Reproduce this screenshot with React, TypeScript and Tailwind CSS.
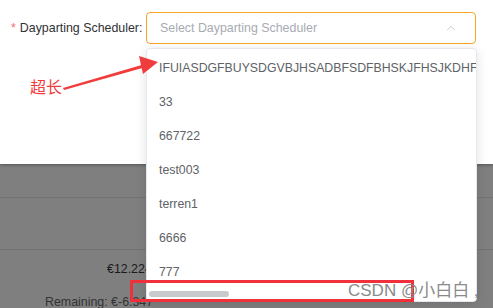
import { ChevronUp } from "lucide-react"

const options = [
  "IFUIASDGFBUYSDGVBJHSADBFSDFBHSKJFHSJKDHFJSDHFKJSDHF",
  "33",
  "667722",
  "test003",
  "terren1",
  "6666",
  "777",
]

export default function App() {
  return (
    <div
      className="relative w-[493px] h-[308px] overflow-hidden bg-[#7f7f7f]"
      style={{ fontFamily: '"Liberation Sans", Arial, "Noto Sans CJK SC", sans-serif' }}
    >
      {/* 表单区域 */}
      <div className="h-[164px] bg-white shadow-[0_1px_3px_rgba(0,0,0,0.35)] relative z-[1]">
        <div className="flex items-center pt-[12px]">
          <label className="w-[146px] pl-[11px] text-[12.4px] text-[#303133] flex items-center whitespace-nowrap">
            <span className="text-[#f56c6c] mr-[4px]">*</span>
            Dayparting Scheduler:
          </label>
          <div className="w-[330px] h-[32px] border border-[#f5a623] rounded-[4px] flex items-center justify-between pl-[13px] pr-[17px]">
            <span className="text-[12.4px] text-[#a8abb2] whitespace-nowrap">Select Dayparting Scheduler</span>
            <ChevronUp className="w-[14px] h-[14px] text-[#c0c4cc]" strokeWidth={1.5} />
          </div>
        </div>
      </div>

      {/* 背景表格 */}
      <div className="flex flex-col text-[12.4px]">
        <div className="h-[34px] border-b border-[#737373]" />
        <div className="h-[52px] border-b border-[#737373]" />
        <div className="flex flex-col items-start">
          <div className="pl-[107px] mt-[10px] text-[#1a1a1a]">€12.224</div>
          <div className="pl-[45px] mt-[14px] text-[#333333]">Remaining: €-6.347</div>
        </div>
      </div>

      {/* 下拉菜单 */}
      <div className="absolute left-[146px] top-[48px] w-[331px] h-[254px] bg-white border border-[#e4e7ed] rounded-[4px] shadow-[0_2px_12px_rgba(0,0,0,0.12)] z-[2] overflow-hidden">
        <ul className="pt-[2px]">
          {options.map((o, i) => (
            <li
              key={i}
              className="h-[34px] leading-[34px] pl-[12px] text-[12.3px] text-[#606266] whitespace-nowrap overflow-hidden"
            >
              {o}
            </li>
          ))}
        </ul>
        <div className="absolute left-[2px] top-[242px] w-[80px] h-[6px] rounded-full bg-[#c8c9cc]" />
      </div>

      {/* 标注 */}
      <svg className="absolute left-0 top-0 z-[3]" width="493" height="308">
        <polygon points="63,88 145,64 146,67 64,90" fill="#f03c3c" />
        <polygon points="158,62 139,56 143,74" fill="#f03c3c" />
        <rect x="131.5" y="281.5" width="281" height="19" fill="none" stroke="#f0303a" strokeWidth="3" />
      </svg>
      <div className="absolute left-[30px] top-[78px] text-[16px] leading-[20px] text-[#f03c3c] z-[3]">超长</div>
      <div className="absolute left-[348px] top-[281px] text-[17px] leading-[20px] text-[#8a8a8a] z-[3] whitespace-nowrap">
        CSDN @小白白 ,
      </div>
    </div>
  )
}
